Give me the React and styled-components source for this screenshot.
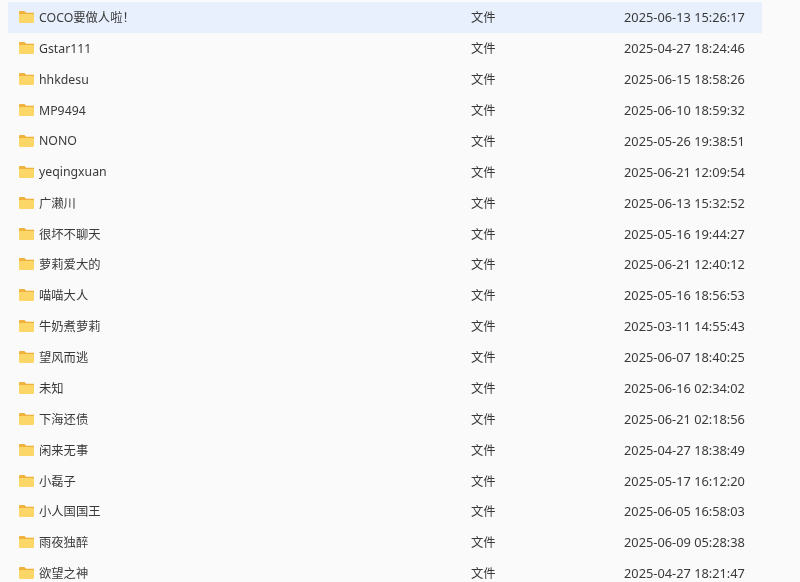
import styled, { createGlobalStyle } from "styled-components";

const GlobalStyle = createGlobalStyle`
    html, body {
        margin: 0;
        padding: 0;
        height: 100%;
        overflow: hidden;
        background-color: #fbfafb;
    }
`

const FileList = styled.div`
    height: 582px;
    overflow: hidden;
    padding: 2px 38px 0 8px;
    font-family: "Noto Sans", "Noto Sans CJK SC", sans-serif;
    font-size: 12.3px;
    color: #3a3a3a;
    filter: blur(0.25px);
`

const Row = styled.div`
    height: 30.89px;
    display: grid;
    grid-template-columns: 463px 153px 1fr;
    align-items: center;
    background-color: ${({ selected }) => selected ? '#e8f0fd' : 'transparent'};
`

const NameCell = styled.div`
    display: flex;
    align-items: center;
    gap: 5px;
    padding-left: 11px;
`

const FolderIcon = styled.svg`
    width: 15px;
    height: 12px;
    flex-shrink: 0;
`

const Cell = styled.div`
    white-space: nowrap;
`

const DateCell = styled.div`
    white-space: nowrap;
    font-size: 12.8px;
`

const rows = [
    ["COCO要做人啦！", "2025-06-13 15:26:17"],
    ["Gstar111", "2025-04-27 18:24:46"],
    ["hhkdesu", "2025-06-15 18:58:26"],
    ["MP9494", "2025-06-10 18:59:32"],
    ["NONO", "2025-05-26 19:38:51"],
    ["yeqingxuan", "2025-06-21 12:09:54"],
    ["广濑川", "2025-06-13 15:32:52"],
    ["很坏不聊天", "2025-05-16 19:44:27"],
    ["萝莉爱大的", "2025-06-21 12:40:12"],
    ["喵喵大人", "2025-05-16 18:56:53"],
    ["牛奶煮萝莉", "2025-03-11 14:55:43"],
    ["望风而逃", "2025-06-07 18:40:25"],
    ["未知", "2025-06-16 02:34:02"],
    ["下海还债", "2025-06-21 02:18:56"],
    ["闲来无事", "2025-04-27 18:38:49"],
    ["小磊子", "2025-05-17 16:12:20"],
    ["小人国国王", "2025-06-05 16:58:03"],
    ["雨夜独醉", "2025-06-09 05:28:38"],
    ["欲望之神", "2025-04-27 18:21:47"],
]

function Folder() {
    return (
        <FolderIcon viewBox="0 0 15 12">
            <path d="M0 1.2C0 .5.5 0 1.2 0h3.7c.4 0 .7.1 1 .4L7.3 1.8H15V4H0z" fill="#efb23c" />
            <path d="M0 3h13.7c.7 0 1.3.6 1.3 1.3v6.4c0 .7-.6 1.3-1.3 1.3H1.3C.6 12 0 11.4 0 10.7z" fill="#fcd768" />
        </FolderIcon>
    )
}

export default function App() {
    return (
        <>
            <GlobalStyle />
            <FileList>
                {rows.map(([name, date], i) => (
                    <Row key={name} selected={i === 0}>
                        <NameCell>
                            <Folder />
                            <Cell>{name}</Cell>
                        </NameCell>
                        <Cell>文件</Cell>
                        <DateCell>{date}</DateCell>
                    </Row>
                ))}
            </FileList>
        </>
    )
}
